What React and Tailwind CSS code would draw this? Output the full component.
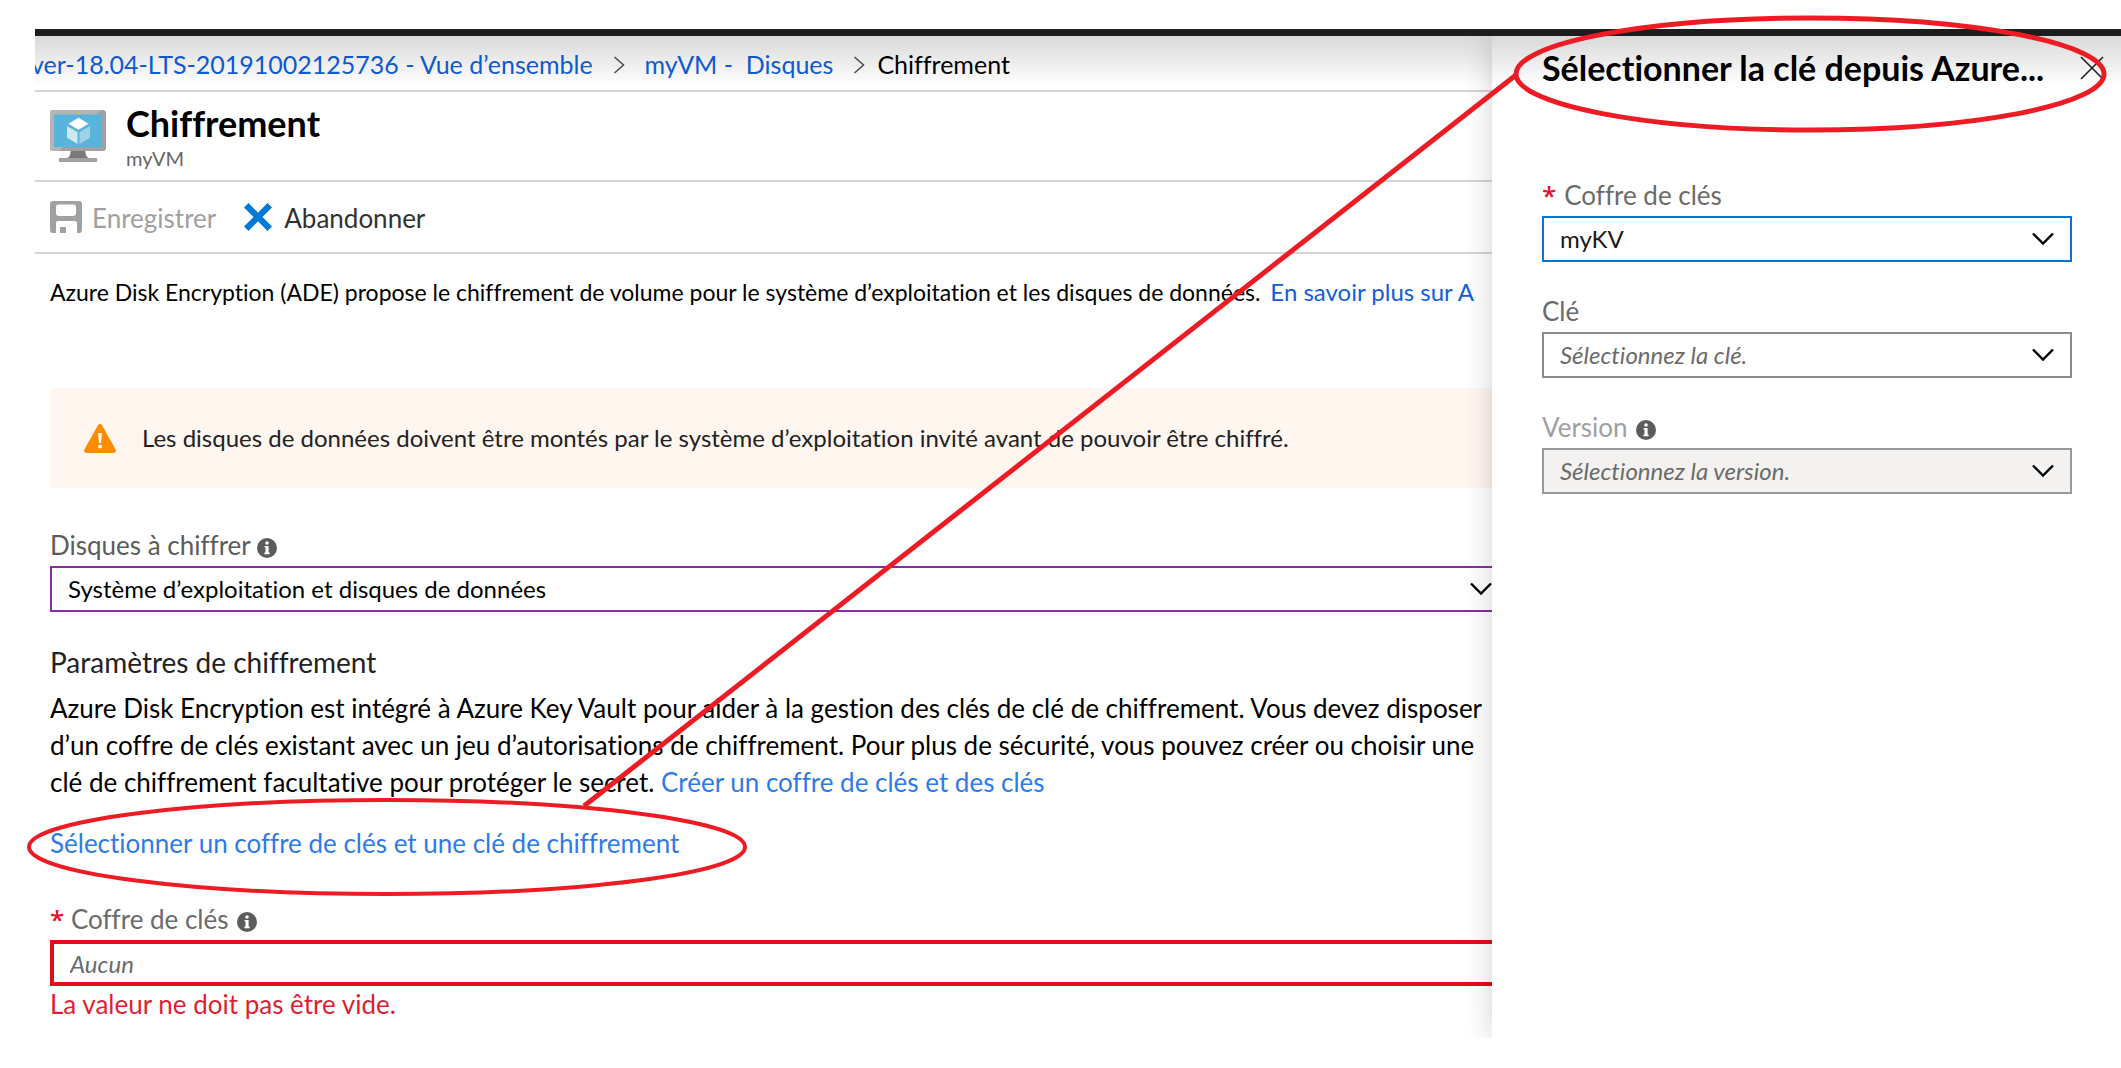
import React from "react";

const InfoIcon = () => (
  <svg viewBox="0 0 20 20" className="mt-1.5 size-5 shrink-0" aria-hidden="true">
    <circle cx="10" cy="10" r="10" fill="#5c5c5c" />
    <circle cx="10" cy="5" r="1.8" fill="#fff" />
    <path d="M7.6 8h4v6.6h1v1.7H7.4v-1.7h1.1V9.600h-.9z" fill="#fff" />
  </svg>
);

const Chevron = () => (
  <svg
    viewBox="0 0 22 14"
    className="pointer-events-none col-start-1 row-start-1 h-[14px] w-[22px] self-center justify-self-end"
    fill="none"
    stroke="#000"
    strokeWidth="2.4"
    aria-hidden="true"
  >
    <path d="M1 1.500 11 11.500 21 1.500" />
  </svg>
);

const CrumbArrow = () => (
  <svg viewBox="0 0 12 18" className="h-[18px] w-3 shrink-0" fill="none" stroke="#555" strokeWidth="1.6" aria-hidden="true">
    <path d="M1.500 1 10.500 9 1.500 17" />
  </svg>
);

const VmIcon = () => (
  <svg viewBox="0 0 56 52" className="h-[52px] w-14 shrink-0" aria-hidden="true">
    <path d="M21 40h14l1 5q1 3 5 3.500H15q4-.5 5-3.500z" fill="#7a7a7a" />
    <rect x="9" y="48" width="38" height="4" fill="#a0a1a2" />
    <rect width="56" height="41" rx="3" fill="#a0a1a2" />
    <path d="M3 0h48L9 41H3a3 3 0 0 1-3-3V3a3 3 0 0 1 3-3z" fill="#b3b4b5" />
    <rect x="4" y="4.500" width="48" height="32.500" fill="#59b4d9" />
    <circle cx="28" cy="2.500" r="1.200" fill="#b8d432" />
    <path d="M28.500 7.800 38.500 13.700 28.500 19.800 18.500 13.700z" fill="#fff" />
    <path d="M17 16l10.500 6.300V34L17 27.700z" fill="#cde7f3" />
    <path d="M40 16l-10.500 6.300V34L40 27.700z" fill="#9fd2e8" />
  </svg>
);

const SaveIcon = () => (
  <svg viewBox="0 0 32 32" className="size-8 shrink-0" aria-hidden="true">
    <path
      fillRule="evenodd"
      d="M3 0h26a3 3 0 0 1 3 3v26a3 3 0 0 1-3 3h-2V22a2 2 0 0 0-2-2H8a2 2 0 0 0-2 2v10H3a3 3 0 0 1-3-3V3a3 3 0 0 1 3-3zM8.500 3.500a2.500 2.500 0 0 0-2.500 2.500v6a3 3 0 0 0 3 3h14a3 3 0 0 0 3-3V6a2.500 2.500 0 0 0-2.500-2.500z"
      fill="#a0a1a2"
    />
    <rect x="10" y="26" width="6" height="6" fill="#a0a1a2" />
  </svg>
);

const DiscardIcon = () => (
  <svg viewBox="0 0 28 28" className="size-7 shrink-0" aria-hidden="true">
    <path d="M4.500 0 14 9.700 23.500 0 28 4.500 18.400 14 28 23.500 23.500 28 14 18.300 4.500 28 0 23.500 9.600 14 0 4.500z" fill="#0078d7" />
  </svg>
);

const WarningIcon = () => (
  <svg viewBox="0 0 32 29" className="h-[29px] w-8 shrink-0" aria-hidden="true">
    <path d="M13.800 1.400a2.500 2.500 0 0 1 4.400 0l13.400 24A2.400 2.400 0 0 1 29.500 29h-27a2.400 2.400 0 0 1-2.100-3.600z" fill="#ff8c00" />
    <path d="M14.200 9h3.600l-.7 10h-2.200z" fill="#fff" />
    <circle cx="16" cy="22.500" r="2" fill="#fff" />
  </svg>
);

const Required = () => <span className="font-['Open_Sans',sans-serif] font-semibold text-[#e8112d]">*</span>;

function Dropdown({ id, value, className, frame, disabled }) {
  return (
    <div className={"grid h-[46px] items-stretch border-2 " + frame}>
      <select
        id={id}
        disabled={disabled}
        defaultValue={value}
        className={"col-start-1 row-start-1 w-full appearance-none bg-transparent pl-4 text-[24px] opacity-100 outline-none " + className}
      >
        <option>{value}</option>
      </select>
      <Chevron />
    </div>
  );
}

export default function App() {
  return (
    <div className="relative min-h-[1068px] overflow-hidden bg-white pt-[29px] pl-[35px] font-['Lato','Open_Sans',sans-serif] text-[26px] text-black [font-variant-ligatures:no-common-ligatures]">
      <div className="h-[7px] bg-[#1c1e1d]" />
      <div className="relative flex overflow-hidden">
        <main className="min-w-0 flex-1 overflow-hidden whitespace-nowrap">
          <nav aria-label="Fil d’Ariane" className="flex h-14 items-center border-b-2 border-[#d6d6d6] pt-1 text-[25px] text-[#0f5fdc]">
            <a href="#vm" className="-ml-1">
              ver-18.04-LTS-20191002125736 - Vue d’ensemble
            </a>
            <span className="px-5">
              <CrumbArrow />
            </span>
            <a href="#disques" className="whitespace-pre">
              myVM -{"  "}Disques
            </a>
            <span className="pr-3 pl-5">
              <CrumbArrow />
            </span>
            <span className="text-black">Chiffrement</span>
          </nav>

          <header className="flex h-[90px] items-center gap-5 border-b-2 border-[#d6d6d6] pl-[15px]">
            <VmIcon />
            <div className="pt-1">
              <h1 className="text-[36px] leading-10 font-bold">Chiffrement</h1>
              <p className="text-[20px] leading-[30px] text-[#666]">myVM</p>
            </div>
          </header>

          <div className="flex h-[72px] items-center gap-7 border-b-2 border-[#d6d6d6] pl-[15px]">
            <button type="button" disabled className="flex items-center gap-2.5 text-[#a0a0a0]">
              <SaveIcon />
              <span className="pt-0.5">Enregistrer</span>
            </button>
            <button type="button" className="flex items-center gap-3 text-[#323232]">
              <DiscardIcon />
              <span className="pt-0.5">Abandonner</span>
            </button>
          </div>

          <div className="pt-[18px] pb-4 pl-[15px]">
            <p className="text-[23px] leading-10">
              Azure Disk Encryption (ADE) propose le chiffrement de volume pour le système d’exploitation et les disques de
              données.{" "}
              <a href="#ade" className="ml-1 text-[24px] text-[#0f5fdc]">
                En savoir plus sur A
              </a>
            </p>

            <div className="mt-[76px] flex h-[100px] items-center gap-[26px] rounded-l bg-[#fff6f0] pl-[34px] text-[24px] text-[#222]">
              <WarningIcon />
              <p>
                Les disques de données doivent être montés par le système d’exploitation invité avant de pouvoir être chiffré.
              </p>
            </div>

            <div className="mt-[34px] flex h-11 items-center gap-1.5 pt-0.5 text-[#5c5c5c]">
              <label htmlFor="disks">Disques à chiffrer</label>
              <InfoIcon />
            </div>
            <Dropdown id="disks" value="Système d’exploitation et disques de données" frame="border-r-0 border-[#8a2da5]" className="text-black" />

            <h2 className="mt-8 text-[28px] leading-9 text-[#222]">Paramètres de chiffrement</h2>
            <p className="mt-2.5 leading-[37px]">
              Azure Disk Encryption est intégré à Azure Key Vault pour aider à la gestion des clés de clé de chiffrement. Vous devez disposer
              <br />
              d’un coffre de clés existant avec un jeu d’autorisations de chiffrement. Pour plus de sécurité, vous pouvez créer ou choisir une
              <br />
              clé de chiffrement facultative pour protéger le secret.{" "}
              <a href="#creer" className="text-[#2f7be5]">
                Créer un coffre de clés et des clés
              </a>
            </p>
            <a href="#selection" className="mt-6 block leading-9 text-[#2f7be5]">
              Sélectionner un coffre de clés et une clé de chiffrement
            </a>

            <div className="mt-[35px] flex h-11 items-center gap-2 pt-0.5 text-[#6b6b6b]">
              <label htmlFor="vault">
                <Required /> Coffre de clés
              </label>
              <InfoIcon />
            </div>
            <input
              id="vault"
              type="text"
              placeholder="Aucun"
              className="block h-[46px] w-full border-4 border-r-0 border-[#e30b1c] bg-white pl-4 text-[24px] italic outline-none placeholder:text-[#6b6b6b]"
            />
            <p className="leading-9 text-[#de1f33]">La valeur ne doit pas être vide.</p>
          </div>
        </main>

        <aside className="w-[629px] shrink-0 bg-white pr-[49px] pl-[50px] shadow-[0_0_28px_rgba(0,0,0,0.18)]">
          <div className="-mr-8 flex items-center justify-between pt-2.5 pb-[82px]">
            <h2 className="text-[34px] leading-11 font-bold whitespace-nowrap">Sélectionner la clé depuis Azure...</h2>
            <button type="button" aria-label="Fermer">
              <svg viewBox="0 0 24 24" className="size-6" fill="none" stroke="#222" strokeWidth="1.600" aria-hidden="true">
                <path d="M1 1 23 23M23 1 1 23" />
              </svg>
            </button>
          </div>

          <div className="flex flex-col gap-[26px]">
            <div>
              <label htmlFor="kv" className="flex h-11 items-center gap-2 pt-0.5 text-[#6b6b6b]">
                <Required /> Coffre de clés
              </label>
              <Dropdown id="kv" value="myKV" frame="border-[#0078d7] pr-4" className="text-[#1a1a1a]" />
            </div>
            <div>
              <label htmlFor="key" className="flex h-11 items-center pt-0.5 text-[#6b6b6b]">
                Clé
              </label>
              <Dropdown id="key" value="Sélectionnez la clé." frame="border-[#8c8c8c] pr-4" className="text-[#6b6b6b] italic" />
            </div>
            <div>
              <div className="flex h-11 items-center gap-2 pt-0.5 text-[#a0a0a0]">
                <label htmlFor="version">Version</label>
                <InfoIcon />
              </div>
              <Dropdown
                id="version"
                value="Sélectionnez la version."
                disabled
                frame="border-[#999] bg-[#f3f2f1] pr-4"
                className="text-[#6b6b6b] italic"
              />
            </div>
          </div>
        </aside>

        <div className="pointer-events-none absolute inset-x-0 top-0 h-[50px] bg-linear-to-b from-black/15 to-transparent" />
      </div>

      {/* Callout linking the vault link to the key selection panel */}
      <svg
        className="pointer-events-none absolute top-0 left-0 h-[1068px] w-[2121px]"
        viewBox="0 0 2121 1068"
        fill="none"
        stroke="#ed1c24"
        aria-hidden="true"
      >
        <ellipse cx="387" cy="847" rx="358" ry="47" strokeWidth="4" />
        <path d="M584 806 1516 75" strokeWidth="5" />
        <ellipse cx="1810" cy="74" rx="294" ry="56" strokeWidth="5" />
      </svg>
    </div>
  );
}
